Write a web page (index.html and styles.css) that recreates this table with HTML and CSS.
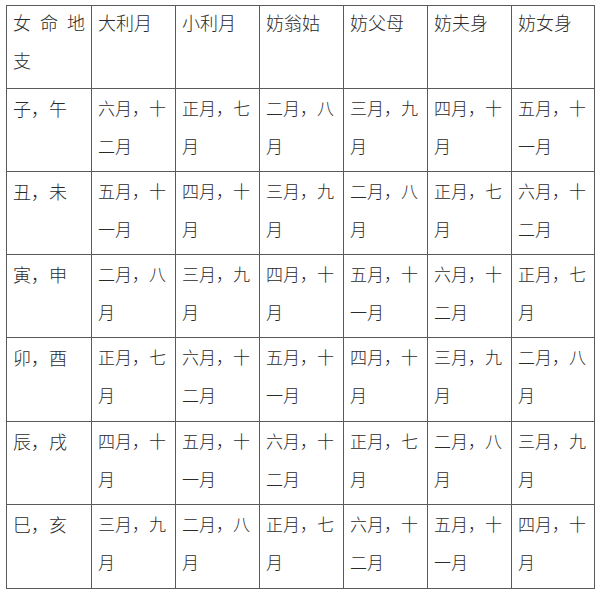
FILE: index.html
```html
<!DOCTYPE html>
<html lang="zh">
<head>
<meta charset="utf-8">
<title>女命地支</title>
<link rel="stylesheet" href="styles.css">
</head>
<body>
<div class="grid">
  <div class="cell head first"><span class="lift">女 命 地 支</span></div>
  <div class="cell head"><span class="lift">大利月</span></div>
  <div class="cell head"><span class="lift">小利月</span></div>
  <div class="cell head"><span class="lift">妨翁姑</span></div>
  <div class="cell head"><span class="lift">妨父母</span></div>
  <div class="cell head"><span class="lift">妨夫身</span></div>
  <div class="cell head"><span class="lift">妨女身</span></div>

  <div class="cell first">子，午</div>
  <div class="cell">六月，十二月</div>
  <div class="cell">正月，七月</div>
  <div class="cell">二月，八月</div>
  <div class="cell">三月，九月</div>
  <div class="cell">四月，十月</div>
  <div class="cell">五月，十一月</div>

  <div class="cell first">丑，未</div>
  <div class="cell">五月，十一月</div>
  <div class="cell">四月，十月</div>
  <div class="cell">三月，九月</div>
  <div class="cell">二月，八月</div>
  <div class="cell">正月，七月</div>
  <div class="cell">六月，十二月</div>

  <div class="cell first">寅，申</div>
  <div class="cell">二月，八月</div>
  <div class="cell">三月，九月</div>
  <div class="cell">四月，十月</div>
  <div class="cell">五月，十一月</div>
  <div class="cell">六月，十二月</div>
  <div class="cell">正月，七月</div>

  <div class="cell first">卯，酉</div>
  <div class="cell">正月，七月</div>
  <div class="cell">六月，十二月</div>
  <div class="cell">五月，十一月</div>
  <div class="cell">四月，十月</div>
  <div class="cell">三月，九月</div>
  <div class="cell">二月，八月</div>

  <div class="cell first">辰，戌</div>
  <div class="cell">四月，十月</div>
  <div class="cell">五月，十一月</div>
  <div class="cell">六月，十二月</div>
  <div class="cell">正月，七月</div>
  <div class="cell">二月，八月</div>
  <div class="cell">三月，九月</div>

  <div class="cell first">巳，亥</div>
  <div class="cell">三月，九月</div>
  <div class="cell">二月，八月</div>
  <div class="cell">正月，七月</div>
  <div class="cell">六月，十二月</div>
  <div class="cell">五月，十一月</div>
  <div class="cell">四月，十月</div>
</div>
</body>
</html>
```

FILE: styles.css
```css
html, body {
  margin: 0;
  padding: 0;
  background: #ffffff;
}

body {
  padding: 5px 0 0 6px;
  font-family: "Noto Sans CJK SC", "Noto Sans CJK TC", sans-serif;
  font-weight: 300;
  color: #2a2a2a;
}

.grid {
  display: grid;
  grid-template-columns: 85px 84px 84px 84px 84px 84px 83px;
  grid-template-rows: 83px 83px 83px 83px 84px 83px 84px;
  width: 589px;
  border-top: 1px solid #5a5a5a;
  border-left: 1px solid #5a5a5a;
  box-sizing: border-box;
}

.cell {
  border-right: 1px solid #5a5a5a;
  border-bottom: 1px solid #5a5a5a;
  padding: 0 5px 0 6px;
  font-size: 17px;
  line-height: 38px;
  overflow: hidden;
}

.cell.head {
  font-size: 18px;
  line-height: 38px;
}

.lift {
  display: block;
  margin-top: -3px;
}

.cell.first {
  font-size: 18px;
  text-align: justify;
  padding: 0 6px 0 6px;
}
```
